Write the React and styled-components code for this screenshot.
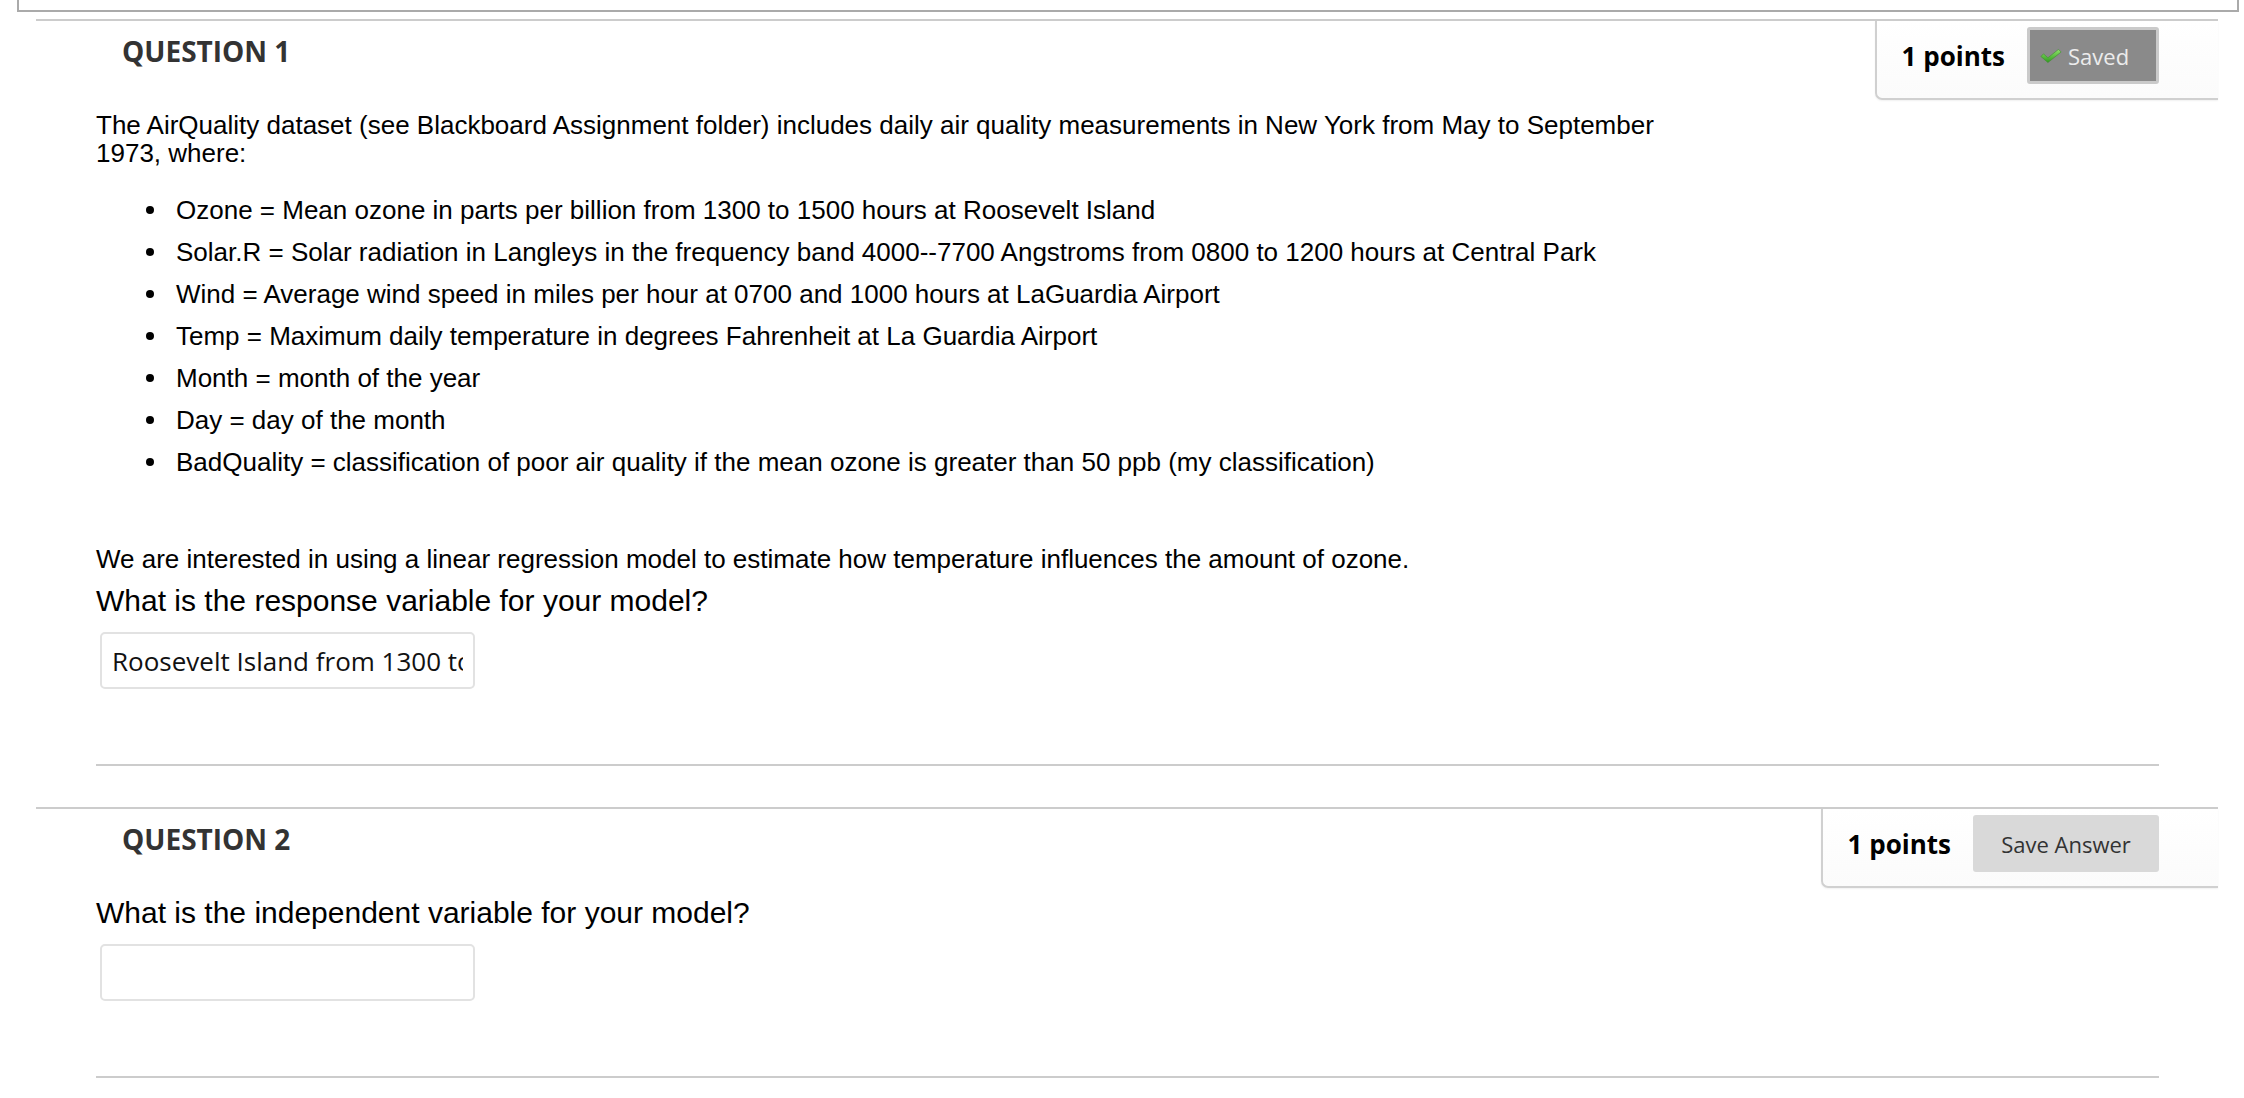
import styled, { createGlobalStyle } from "styled-components";

const GlobalStyle = createGlobalStyle`
  html, body {
    margin: 0;
    padding: 0;
    background: #fff;
  }
  body {
    font-family: "Liberation Sans", Arial, sans-serif;
    color: #000;
  }
`;

const TopFrame = styled.div`
  margin: 0 5px 0 17px;
  height: 10px;
  border: 2px solid #aaa;
  border-top: none;
`;

const Section = styled.section`
  margin: 7px 0 41px 36px;
  width: 2182px;
  border-top: 2px solid #ccc;
`;

const Header = styled.div`
  display: flex;
  justify-content: space-between;
  align-items: flex-start;
`;

const Title = styled.h2`
  margin: 11px 0 0 86px;
  font-family: "Open Sans", sans-serif;
  font-weight: 700;
  font-size: 28px;
  line-height: 38px;
  color: #333;
`;

const PointsBox = styled.div`
  display: flex;
  align-items: center;
  gap: 22px;
  padding: 6px 59px 14px 25px;
  border-left: 2px solid #d0d0d0;
  border-bottom: 2px solid #d0d0d0;
  border-bottom-left-radius: 7px;
  box-shadow: 0 1px 2px rgba(0, 0, 0, 0.06);
  background: linear-gradient(#fff, #fbfbfb);
`;

const Points = styled.span`
  font-family: "Open Sans", sans-serif;
  font-weight: 700;
  font-size: 26px;
  color: #000;
`;

const SaveButton = styled.button`
  display: flex;
  align-items: center;
  justify-content: ${(p) => (p.$saved ? "flex-start" : "center")};
  gap: 6px;
  box-sizing: border-box;
  height: 57px;
  width: ${(p) => (p.$saved ? "132px" : "186px")};
  padding: ${(p) => (p.$saved ? "0 0 0 10px" : "0")};
  border: ${(p) => (p.$saved ? "3px solid #cacaca" : "none")};
  border-radius: 3px;
  background: ${(p) => (p.$saved ? "#8a8a8a" : "#d9d9d9")};
  color: ${(p) => (p.$saved ? "#ececec" : "#333")};
  font-family: "Open Sans", sans-serif;
  font-size: 22px;
  cursor: pointer;
`;

const Content = styled.div`
  padding: 8px 59px 0 60px;
`;

const Para = styled.p`
  margin: ${(p) => p.$top || 0}px 0 0;
  max-width: 1600px;
  font-size: 26px;
  line-height: 28px;
`;

const List = styled.ul`
  margin: 29px 0 0;
  padding-left: 80px;
  list-style: none;
  font-size: 26px;
  line-height: 28px;
`;

const Item = styled.li`
  position: relative;
  margin-bottom: 14px;
  &::before {
    content: "";
    position: absolute;
    left: -30px;
    top: 10px;
    width: 8px;
    height: 8px;
    border-radius: 50%;
    background: #000;
  }
  &:last-child {
    margin-bottom: 0;
  }
`;

const Prompt = styled.p`
  margin: ${(p) => p.$top || 0}px 0 0;
  font-size: 30px;
  line-height: 34px;
`;

const AnswerInput = styled.input`
  display: block;
  box-sizing: border-box;
  margin: 14px 0 0 4px;
  width: 375px;
  height: 57px;
  padding: 0 10px;
  border: 2px solid #e2e2e2;
  border-radius: 5px;
  font-family: "Open Sans", sans-serif;
  font-size: 26px;
  color: #111;
  outline: none;
`;

const Divider = styled.hr`
  margin: 75px 0 0;
  border: none;
  border-top: 2px solid #ccc;
`;

const CheckIcon = () => (
  <svg width="22" height="16" viewBox="0 0 25 16">
    <defs>
      <linearGradient id="chk" x1="0" y1="0" x2="0" y2="1">
        <stop offset="0" stopColor="#8fe36a" />
        <stop offset="1" stopColor="#2f9a1e" />
      </linearGradient>
    </defs>
    <path
      d="M1 8.5 L4 5.5 L9 10 L21 0.5 L24 3.5 L9 15.5 Z"
      fill="url(#chk)"
      stroke="#3a8a2a"
      strokeWidth="0.6"
      strokeLinejoin="round"
    />
  </svg>
);

const variables = [
  "Ozone = Mean ozone in parts per billion from 1300 to 1500 hours at Roosevelt Island",
  "Solar.R = Solar radiation in Langleys in the frequency band 4000--7700 Angstroms from 0800 to 1200 hours at Central Park",
  "Wind = Average wind speed in miles per hour at 0700 and 1000 hours at LaGuardia Airport",
  "Temp = Maximum daily temperature in degrees Fahrenheit at La Guardia Airport",
  "Month = month of the year",
  "Day = day of the month",
  "BadQuality = classification of poor air quality if the mean ozone is greater than 50 ppb (my classification)",
];

const Question = ({ number, saved, children }) => (
  <Section>
    <Header>
      <Title>QUESTION {number}</Title>
      <PointsBox>
        <Points>1 points</Points>
        {saved ? (
          <SaveButton $saved>
            <CheckIcon />
            Saved
          </SaveButton>
        ) : (
          <SaveButton>Save Answer</SaveButton>
        )}
      </PointsBox>
    </Header>
    <Content>
      {children}
      <Divider />
    </Content>
  </Section>
);

const App = () => {
  return (
    <>
      <GlobalStyle />
      <TopFrame />
      <Question number={1} saved>
        <Para $top={3}>
          The AirQuality dataset (see Blackboard Assignment folder) includes
          daily air quality measurements in New York from May to September
          1973, where:
        </Para>
        <List>
          {variables.map((v) => (
            <Item key={v}>{v}</Item>
          ))}
        </List>
        <Para $top={69}>
          We are interested in using a linear regression model to estimate how
          temperature influences the amount of ozone.
        </Para>
        <Prompt $top={11}>What is the response variable for your model?</Prompt>
        <AnswerInput
          type="text"
          defaultValue="Roosevelt Island from 1300 to 1500 hours"
        />
      </Question>
      <Question number={2}>
        <Prompt $top={0}>What is the independent variable for your model?</Prompt>
        <AnswerInput type="text" />
      </Question>
    </>
  );
};

export default App;
